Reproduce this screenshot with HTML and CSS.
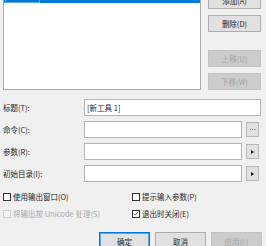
FILE: index.html
```
<!DOCTYPE html>
<html>
<head>
<meta charset="utf-8">
<link rel="stylesheet" href="styles.css">
</head>
<body>
<div class="dialog">
  <div class="top">
    <div class="list">
      <div class="sel"><span class="focus">[新工具 1]</span></div>
    </div>
    <div class="side">
      <div class="btn">添加(A)</div>
      <div class="btn">删除(D)</div>
      <div class="btn dis gap-big">上移(U)</div>
      <div class="btn dis">下移(W)</div>
    </div>
  </div>

  <div class="form">
    <div class="label">标题(T):</div>
    <div class="field"><div class="input wide">[新工具 1]</div></div>

    <div class="label">命令(C):</div>
    <div class="field"><div class="input"></div><div class="mini">…</div></div>

    <div class="label">参数(R):</div>
    <div class="field"><div class="input"></div><div class="mini"><span class="arrow"></span></div></div>

    <div class="label">初始目录(I):</div>
    <div class="field"><div class="input"></div><div class="mini"><span class="arrow"></span></div></div>
  </div>

  <div class="checks">
    <div class="check"><span class="box"></span>使用输出窗口(O)</div>
    <div class="check"><span class="box"></span>提示输入参数(P)</div>
    <div class="check disabled"><span class="box"></span>将输出按 Unicode 处理(S)</div>
    <div class="check"><span class="box checked"><svg viewBox="0 0 8 8" width="7" height="7"><path d="M1 4.2 L3 6.2 L7 1.6" fill="none" stroke="#222" stroke-width="1"/></svg></span>退出时关闭(E)</div>
  </div>

  <div class="footer">
    <div class="btn big default">确定</div>
    <div class="btn big">取消</div>
    <div class="btn big dis">应用(L)</div>
  </div>
</div>
</body>
</html>
```
FILE: styles.css
```
html, body {
  margin: 0;
  padding: 0;
  background: #f0f0f0;
}
body {
  width: 266px;
  height: 246px;
  overflow: hidden;
  font-family: "Noto Sans CJK SC", "Noto Sans", sans-serif;
  font-size: 7.5px;
  color: #1e1e1e;
}
.dialog {
  width: 266px;
  height: 246px;
  overflow: hidden;
}
.top {
  display: flex;
  padding-left: 3px;
  height: 90px;
}
.list {
  width: 196px;
  height: 89px;
  background: #fff;
  border: 1px solid #a9a9a9;
  border-top: none;
}
.sel {
  height: 3px;
  background: #0078d7;
  overflow: hidden;
  padding-left: 1px;
}
.focus {
  display: block;
  width: 33px;
  height: 2px;
  border: 1px solid #5aa5e6;
  border-top: none;
  color: transparent;
  font-size: 1px;
}
.side {
  margin-left: 7px;
  margin-top: -8px;
  width: 53px;
  display: flex;
  flex-direction: column;
  gap: 6px;
}
.btn {
  box-sizing: border-box;
  height: 17px;
  background: #e1e1e1;
  border: 1px solid #adadad;
  display: flex;
  align-items: center;
  justify-content: center;
  color: #1e1e1e;
  line-height: 1;
}
.btn.dis {
  background: #cccccc;
  border-color: #c4c4c4;
  color: #a3a3a3;
}
.gap-big {
  margin-top: 12px;
}
.form {
  display: grid;
  grid-template-columns: 81px 177px;
  row-gap: 5px;
  padding-left: 3px;
  margin-top: 9px;
}
.label {
  height: 17px;
  display: flex;
  align-items: center;
}
.field {
  display: flex;
  align-items: center;
  gap: 4px;
  height: 17px;
}
.input {
  box-sizing: border-box;
  width: 158px;
  height: 17px;
  background: #fff;
  border: 1px solid #b4b4b4;
  display: flex;
  align-items: center;
  padding-left: 2px;
}
.input.wide {
  width: 177px;
}
.mini {
  box-sizing: border-box;
  width: 13px;
  height: 15px;
  background: #e1e1e1;
  border: 1px solid #b8b8b8;
  display: flex;
  align-items: center;
  justify-content: center;
  font-size: 7px;
  color: #333;
  line-height: 1;
}
.arrow {
  width: 0;
  height: 0;
  border-top: 2.5px solid transparent;
  border-bottom: 2.5px solid transparent;
  border-left: 3px solid #111;
}
.checks {
  display: grid;
  grid-template-columns: 129px 1fr;
  padding-left: 3px;
  margin-top: 6px;
}
.check {
  height: 17px;
  display: flex;
  align-items: center;
  white-space: nowrap;
}
.box {
  box-sizing: border-box;
  width: 8px;
  height: 8px;
  border: 1px solid #333;
  background: #fff;
  margin-right: 2px;
  display: flex;
  align-items: center;
  justify-content: center;
}
.check.disabled {
  color: #a8a8a8;
}
.check.disabled .box {
  border-color: #cfcfcf;
  background: #f4f4f4;
}
.footer {
  display: flex;
  gap: 5px;
  padding-left: 99px;
  margin-top: 10px;
}
.btn.big {
  width: 51px;
  height: 19px;
}
.btn.default {
  border-color: #0078d7;
  box-shadow: inset 0 0 0 1px #5fa6e3;
}
```
